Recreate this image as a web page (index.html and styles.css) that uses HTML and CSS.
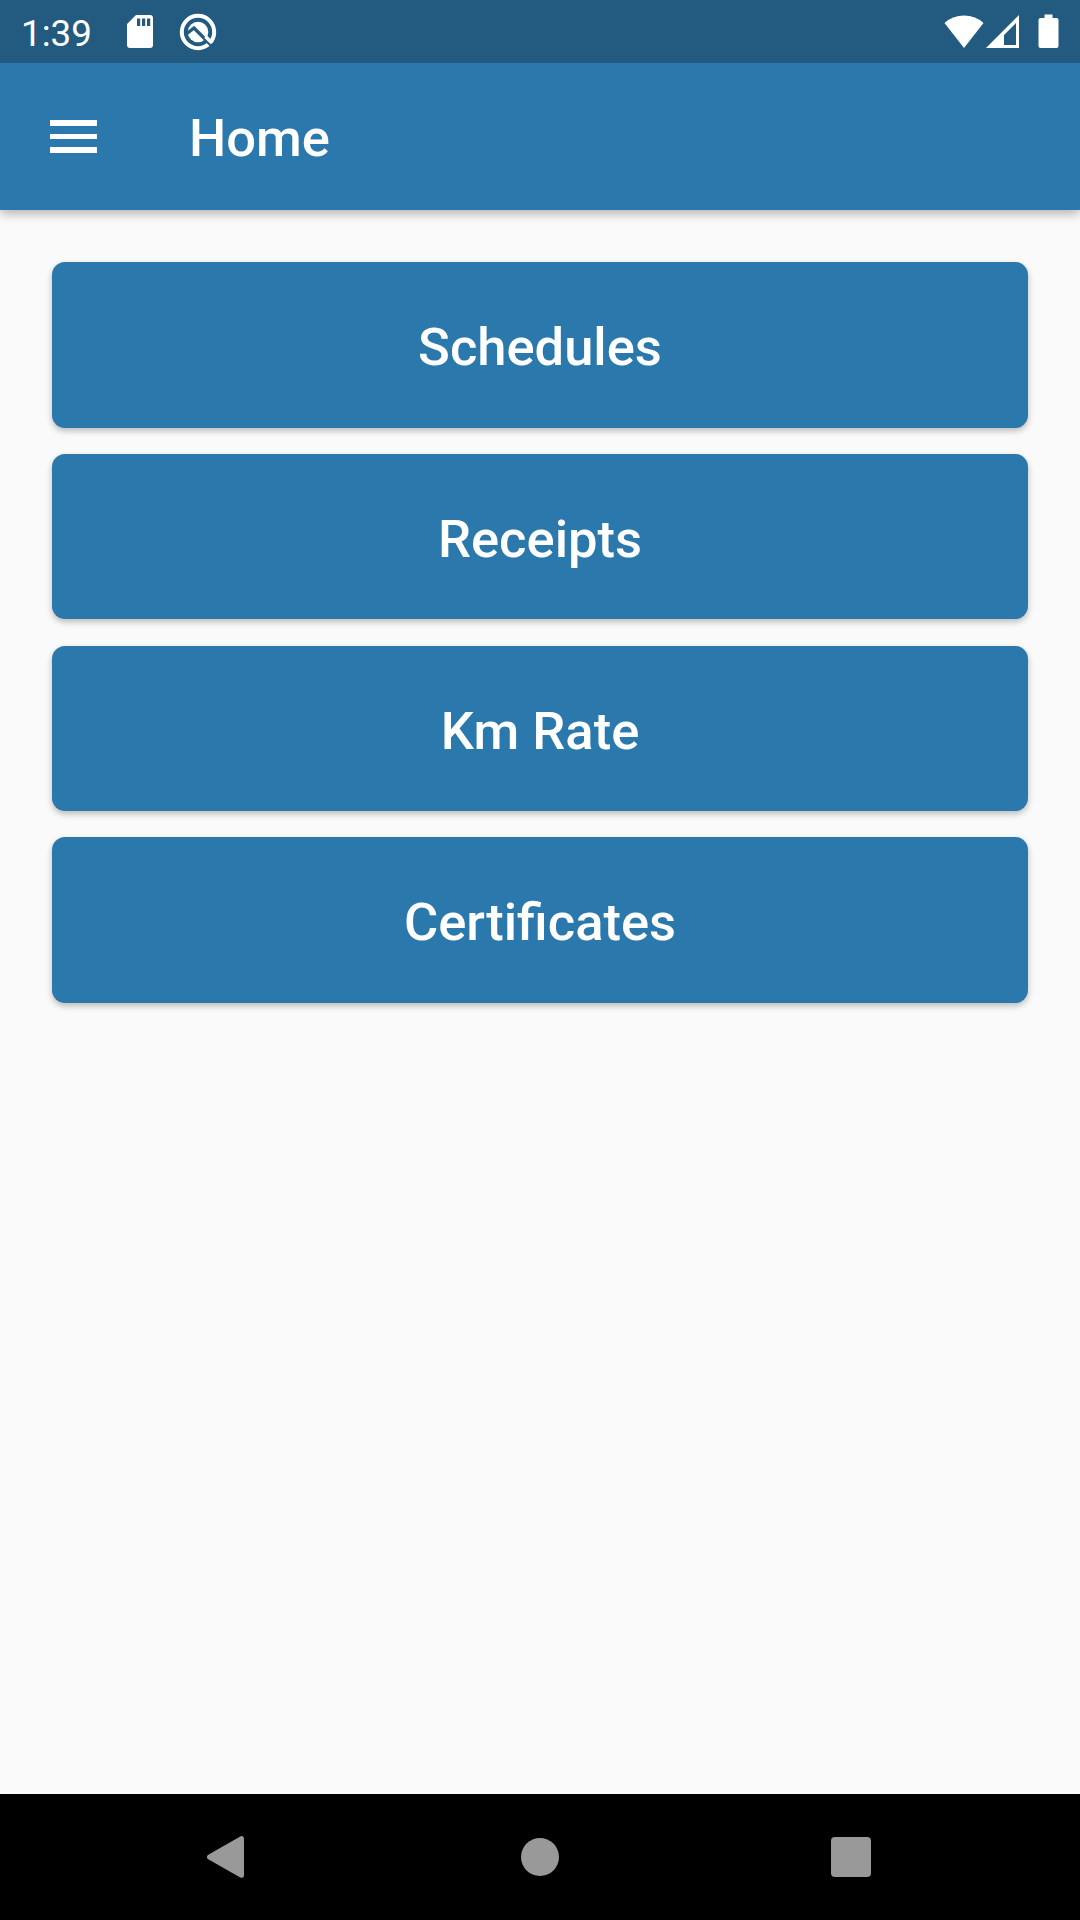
FILE: index.html
```
<!DOCTYPE html>
<html lang="en">
    <head>
        <meta charset="UTF-8">
        <title>Home</title>
        <link rel="stylesheet" href="styles.css">
    </head>
    <body>
        <div class="status">
            <span class="clock">1:39</span>
            <!-- SD card -->
            <svg class="sd" width="28" height="35" viewBox="0 0 28 35">
                <path fill="#fff" fill-rule="evenodd" d="M10 1H24Q27 1 27 4V31Q27 34 24 34H4Q1 34 1 31V10ZM11 4.500V12H14.200V4.500ZM16 4.500V12H19.200V4.500ZM21 4.500V12H24.200V4.500Z"/>
            </svg>
            <svg class="round" width="38" height="38" viewBox="0 0 38 38">
                <circle cx="19" cy="19" r="16.200" fill="none" stroke="#fff" stroke-width="4"/>
                <circle cx="19" cy="19" r="10.300" fill="#fff"/>
                <path fill="none" stroke="#235a80" stroke-width="3.200" d="M8 20.500L15 15L33 33"/>
                <path fill="none" stroke="#fff" stroke-width="3.600" d="M26.500 23.500L33 30"/>
            </svg>
            <div class="right">
                <svg class="wifi" width="40" height="34" viewBox="0 0 40 34">
                    <path fill="#fff" d="M0.500 8Q8.500 0.500 20 0.500T39.500 8L20 33Z"/>
                </svg>
                <svg class="signal" width="34" height="34" viewBox="0 0 34 34">
                    <path fill="#fff" fill-rule="evenodd" d="M33 0V33H0ZM30 8L18 20V30H30Z"/>
                </svg>
                <svg width="21" height="35" viewBox="0 0 21 35">
                    <path fill="#fff" d="M6.500 0.500H14.500V4H18.500Q20.500 4 20.500 6V32Q20.500 34 18.500 34H2.500Q0.500 34 0.500 32V6Q0.500 4 2.500 4H6.500Z"/>
                </svg>
            </div>
        </div>
        <div class="header">
            <div class="menu"><span></span><span></span><span></span></div>
            <h1>Home</h1>
        </div>
        <div class="content">
            <button class="btn">Schedules</button>
            <button class="btn">Receipts</button>
            <button class="btn">Km Rate</button>
            <button class="btn">Certificates</button>
        </div>
        <div class="nav">
            <svg width="44" height="44" viewBox="0 0 44 44">
                <path fill="#999" stroke="#999" stroke-width="5" stroke-linejoin="round" d="M5.500 22L37.500 3.700V40.300Z"/>
            </svg>
            <div class="circle"></div>
            <div class="square"></div>
        </div>
    </body>
</html>
```
FILE: styles.css
```
body{margin:0;height:1920px;display:flex;flex-direction:column;background-color:#fafafa;font-family:Roboto,sans-serif;color:white;overflow:hidden;}
svg{display:block;flex:none;}
/* status bar */
.status{height:63px;flex:none;display:flex;align-items:center;padding:0 21px;box-sizing:border-box;background-color:#235a80;position:relative;z-index:1;}
.clock{width:105px;font-size:36.75px;line-height:44px;padding-top:4px;}
.round{margin:1px 0 0 25px;}
.right{margin-left:auto;display:flex;align-items:center;}
.signal{margin-left:2px;margin-right:18px;}
/* header */
.header{height:147px;flex:none;display:flex;align-items:center;padding-left:50px;background-color:#2b78ad;box-shadow:0 4px 10px rgba(0,0,0,0.28);}
.menu{width:47px;display:flex;flex-direction:column;gap:7.5px;}
.menu span{height:5.7px;background-color:white;}
h1{margin:0 0 0 92px;font-size:52.5px;font-weight:500;line-height:62px;padding-top:3px;}
/* buttons */
.content{flex:1;display:flex;flex-direction:column;gap:26.25px;padding:52.4px;}
.btn{height:165.4px;border:none;border-radius:13px;padding:4.3px 0 0;background-color:#2b78ad;color:white;font-family:Roboto,sans-serif;font-size:52.5px;font-weight:500;box-shadow:0 3px 6px rgba(0,0,0,0.25);}
/* bottom navigation */
.nav{height:126px;flex:none;display:flex;align-items:center;justify-content:space-between;padding:0 209px 0 204px;background-color:black;}
.circle{width:38px;height:38px;border-radius:50%;background-color:#999;}
.square{width:40px;height:40px;border-radius:4px;background-color:#999;}
```
